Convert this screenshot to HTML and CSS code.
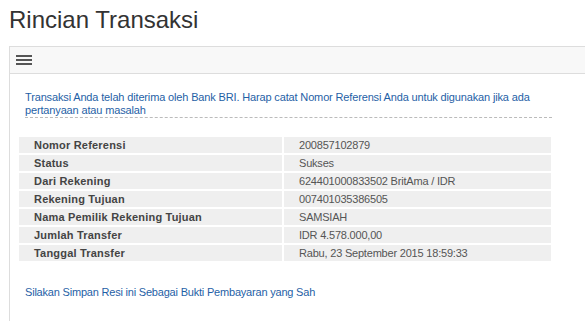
FILE: index.html
```html
<!DOCTYPE html>
<html lang="id">
<head>
<meta charset="utf-8">
<title>Rincian Transaksi</title>
<link rel="stylesheet" href="styles.css">
</head>
<body>
<div class="page">
  <h1 class="title">Rincian Transaksi</h1>
  <div class="panel">
    <div class="panel-head">
      <svg class="menu-icon" width="16" height="10" viewBox="0 0 16 10" aria-hidden="true">
        <rect x="0" y="0" width="16" height="2" fill="#555"/>
        <rect x="0" y="4" width="16" height="2" fill="#555"/>
        <rect x="0" y="8" width="16" height="2" fill="#555"/>
      </svg>
    </div>
    <div class="panel-body">
      <p class="notice">Transaksi Anda telah diterima oleh Bank BRI. Harap catat Nomor Referensi Anda untuk digunakan jika ada pertanyaan atau masalah</p>
      <table class="detail">
        <tr><th>Nomor Referensi</th><td>200857102879</td></tr>
        <tr><th>Status</th><td>Sukses</td></tr>
        <tr><th>Dari Rekening</th><td>624401000833502 BritAma / IDR</td></tr>
        <tr><th>Rekening Tujuan</th><td>007401035386505</td></tr>
        <tr><th>Nama Pemilik Rekening Tujuan</th><td>SAMSIAH</td></tr>
        <tr><th>Jumlah Transfer</th><td>IDR 4.578.000,00</td></tr>
        <tr><th>Tanggal Transfer</th><td>Rabu, 23 September 2015 18:59:33</td></tr>
      </table>
      <p class="footnote">Silakan Simpan Resi ini Sebagai Bukti Pembayaran yang Sah</p>
    </div>
  </div>
</div>
</body>
</html>
```
FILE: styles.css
```css
html, body {
  margin: 0;
  padding: 0;
  background: #fff;
  overflow: hidden;
}
body {
  font-family: "Liberation Sans", Arial, sans-serif;
  height: 321px;
}
.page {
  padding-left: 9px;
  height: 321px;
  display: flex;
  flex-direction: column;
}
.title {
  margin: 6px 0 12px 0;
  font-size: 24px;
  line-height: 28px;
  font-weight: normal;
  color: #333;
}
.panel {
  flex: 1;
  border-top: 1px solid #ddd;
  border-left: 1px solid #ddd;
}
.panel-head {
  height: 26px;
  background: #f8f8f8;
  border-bottom: 1px solid #ddd;
  display: flex;
  align-items: flex-start;
  padding-left: 6px;
}
.menu-icon {
  display: block;
  margin-top: 8px;
}
.panel-body {
  padding: 17px 33px 0 7px;
}
.notice {
  margin: 0 0 17px 8px;
  font-size: 11px;
  line-height: 13px;
  letter-spacing: -0.15px;
  color: #1f5fa6;
  border-bottom: 1px dashed #bbb;
}
.detail {
  width: 536px;
  border-collapse: separate;
  border-spacing: 2px;
  font-size: 11px;
}
.detail th,
.detail td {
  height: 16px;
  padding: 0 15px;
  line-height: 16px;
  background: #efefef;
  text-align: left;
  vertical-align: middle;
}
.detail th {
  width: 233px;
  font-weight: bold;
  color: #444;
  letter-spacing: 0.2px;
}
.detail td {
  font-weight: normal;
  color: #555;
  letter-spacing: -0.2px;
}
.footnote {
  margin: 23px 0 0 8px;
  font-size: 11px;
  line-height: 13px;
  letter-spacing: -0.2px;
  color: #1f5fa6;
}
```
